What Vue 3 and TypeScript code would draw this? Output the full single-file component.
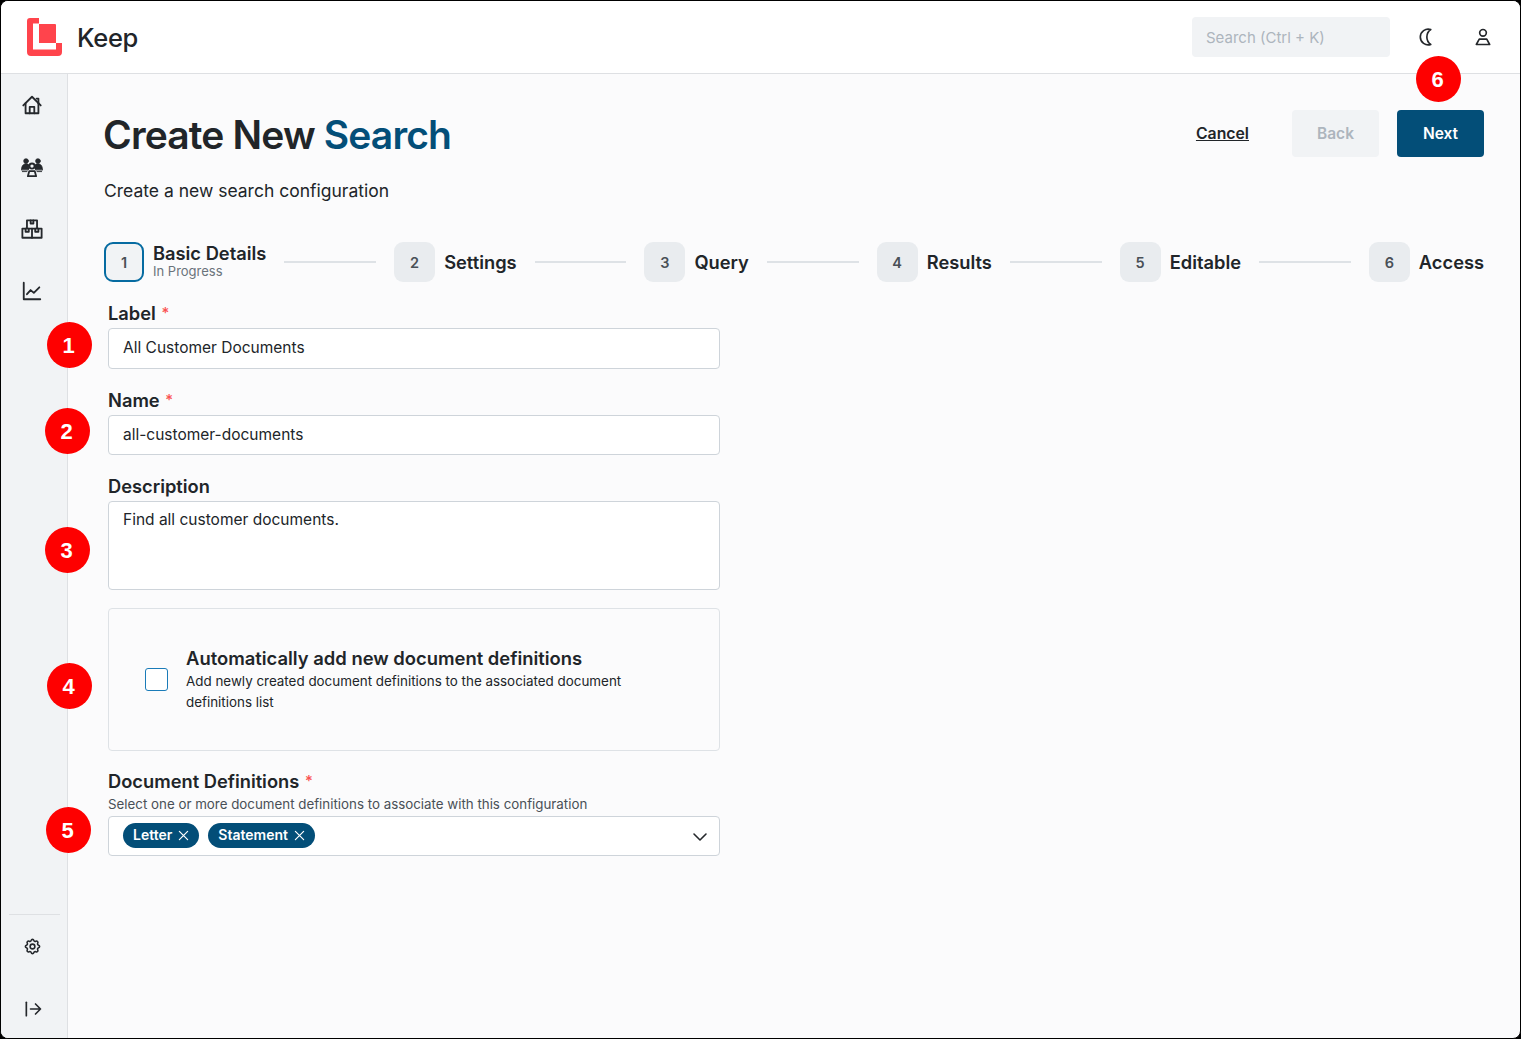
<script setup lang="ts">
const steps = [
  { n: 1, title: 'Basic Details', sub: 'In Progress' },
  { n: 2, title: 'Settings' },
  { n: 3, title: 'Query' },
  { n: 4, title: 'Results' },
  { n: 5, title: 'Editable' },
  { n: 6, title: 'Access' }
]

const markers = [
  { n: 1, x: 46, y: 321 },
  { n: 2, x: 44, y: 407 },
  { n: 3, x: 44, y: 526 },
  { n: 4, x: 46, y: 662 },
  { n: 5, x: 45, y: 806 },
  { n: 6, x: 1415, y: 55 }
]
</script>

<template>
  <div class="frame">
    <header class="topbar">
      <div class="brand">
        <svg class="logo" viewBox="0 0 35 38" width="35" height="38">
          <path d="M3 0h9v25h23v9a4 4 0 0 1-4 4H4a4 4 0 0 1-4-4V3a3 3 0 0 1 3-3z" fill="#ff444c" />
          <path d="M6 5.500h6V25h17v6.500H6z" fill="#fff" />
          <path d="M12 6h16a1 1 0 0 1 1 1v18H12z" fill="#ff444c" />
        </svg>
        <span class="brand-name">Keep</span>
      </div>
      <div class="top-actions">
        <div class="search">Search (Ctrl + K)</div>
        <svg class="moon" viewBox="0 0 24 24" width="20" height="20">
          <path d="M16.500 3a9.500 9.500 0 1 0 0 18 11 11 0 0 1 0-18z" />
        </svg>
        <svg class="user" viewBox="0 0 24 24" width="20" height="20">
          <circle cx="12" cy="7" r="4" />
          <path d="M7.500 14.500h9L20 21H4z" />
        </svg>
      </div>
    </header>

    <div class="body">
      <aside class="sidebar">
        <nav class="nav">
          <svg viewBox="0 0 24 24" width="22" height="22">
            <path d="M2.500 12.500 12 3l9.500 9.500" />
            <path d="M17 5h2v5" />
            <path d="M5 10v11h14V10" />
            <path d="M9.500 21v-7h5v7" />
          </svg>
          <svg viewBox="0 0 24 24" width="22" height="22">
            <circle cx="5.500" cy="5.500" r="2.600" class="solid" />
            <circle cx="18.500" cy="5.500" r="2.600" class="solid" />
            <path d="M.5 15c0-4 2-6.500 5-6.500 1.500 0 2.500.5 3.500 1.500-.5 1-.5 2.500 0 3.500L8 15z" class="solid" />
            <path d="M23.500 15c0-4-2-6.500-5-6.500-1.500 0-2.500.5-3.500 1.500.5 1 .5 2.500 0 3.500l1 1.500z" class="solid" />
            <circle cx="12" cy="11" r="2.800" />
            <path d="M7.500 22 9 16.500h6l1.500 5.500z" />
            <path d="M1.500 17h5M17.500 17h5" class="thin" />
          </svg>
          <svg viewBox="0 0 24 24" width="22" height="22">
            <path d="M6.500 11V2.500h11V11" />
            <path d="M10.500 2.500V6h3V2.500" />
            <path d="M1.500 11.500h21v10h-21z" />
            <path d="M12 11.500v10" />
            <path d="M5 11.500V15h3.500v-3.500M15.500 11.500V15H19v-3.500" />
          </svg>
          <svg viewBox="0 0 24 24" width="22" height="22">
            <path d="M3 3v18h18" />
            <path d="m6.500 15.500 4-4.500 3.500 3 6-6" />
          </svg>
        </nav>
        <div class="nav-bottom">
          <svg viewBox="0 0 24 24" width="19" height="19">
            <path d="M10.325 4.317c.426 -1.756 2.924 -1.756 3.35 0a1.724 1.724 0 0 0 2.573 1.066c1.543 -.94 3.31 .826 2.37 2.37a1.724 1.724 0 0 0 1.065 2.572c1.756 .426 1.756 2.924 0 3.35a1.724 1.724 0 0 0 -1.066 2.573c.94 1.543 -.826 3.31 -2.37 2.37a1.724 1.724 0 0 0 -2.572 1.065c-.426 1.756 -2.924 1.756 -3.35 0a1.724 1.724 0 0 0 -2.573 -1.066c-1.543 .94 -3.31 -.826 -2.37 -2.37a1.724 1.724 0 0 0 -1.065 -2.572c-1.756 -.426 -1.756 -2.924 0 -3.35a1.724 1.724 0 0 0 1.066 -2.573c-.94 -1.543 .826 -3.31 2.37 -2.37c1 .608 2.296 .07 2.572 -1.065z" />
            <circle cx="12" cy="12" r="3" />
          </svg>
          <svg class="collapse" viewBox="0 0 24 24" width="20" height="20">
            <path d="M4 4v16" />
            <path d="M9 12h12M15 6l6 6-6 6" />
          </svg>
        </div>
      </aside>

      <main class="main">
        <div class="page-head">
          <h1>Create New <span>Search</span></h1>
          <div class="buttons">
            <a class="cancel">Cancel</a>
            <button class="btn back">Back</button>
            <button class="btn next">Next</button>
          </div>
        </div>
        <p class="subtitle">Create a new search configuration</p>

        <div class="stepper">
          <template v-for="(s, i) in steps" :key="s.n">
            <div class="step">
              <div class="step-num" :class="{ current: i === 0 }">{{ s.n }}</div>
              <div>
                <div class="step-title">{{ s.title }}</div>
                <div v-if="s.sub" class="step-sub">{{ s.sub }}</div>
              </div>
            </div>
            <div v-if="i < steps.length - 1" class="connector"></div>
          </template>
        </div>

        <form class="form">
          <div class="field">
            <label>Label <em>*</em></label>
            <div class="input">All Customer Documents</div>
          </div>
          <div class="field">
            <label>Name <em>*</em></label>
            <div class="input">all-customer-documents</div>
          </div>
          <div class="field">
            <label>Description</label>
            <div class="input textarea">Find all customer documents.</div>
          </div>
          <div class="check-card">
            <span class="checkbox"></span>
            <div>
              <div class="check-title">Automatically add new document definitions</div>
              <div class="check-desc">Add newly created document definitions to the associated document definitions list</div>
            </div>
          </div>
          <div class="field docs">
            <label>Document Definitions <em>*</em></label>
            <div class="hint">Select one or more document definitions to associate with this configuration</div>
            <div class="input select">
              <span class="pill">Letter
                <svg viewBox="0 0 12 12" width="11" height="11"><path d="m1.500 1.500 9 9M10.500 1.500l-9 9" /></svg>
              </span>
              <span class="pill">Statement
                <svg viewBox="0 0 12 12" width="11" height="11"><path d="m1.500 1.500 9 9M10.500 1.500l-9 9" /></svg>
              </span>
              <svg class="chevron" viewBox="0 0 16 16" width="16" height="16"><path d="m2 5 6 6 6-6" /></svg>
            </div>
          </div>
        </form>
      </main>
    </div>

    <div
      v-for="m in markers"
      :key="m.n"
      class="marker"
      :style="{ left: m.x + 'px', top: m.y + 'px' }"
    >{{ m.n }}</div>
  </div>
</template>

<style>
html, body {
  margin: 0;
  background: #000;
}
</style>

<style scoped>
.frame {
  position: relative;
  box-sizing: border-box;
  width: 1521px;
  height: 1039px;
  border: 1px solid #000;
  border-radius: 8px;
  overflow: hidden;
  display: flex;
  flex-direction: column;
  background: #fbfbfc;
  color: #212529;
  font-family: Inter, "Liberation Sans", sans-serif;
}
svg {
  fill: none;
  stroke: #25282c;
  stroke-width: 2;
  stroke-linecap: round;
  stroke-linejoin: round;
  flex: none;
}
.solid {
  fill: #25282c;
  stroke-width: 0.8;
}
.thin {
  stroke-width: 1;
}
.topbar {
  height: 73px;
  flex: none;
  box-sizing: border-box;
  border-bottom: 1px solid #dee0e3;
  background: #fff;
  display: flex;
  align-items: center;
  justify-content: space-between;
  padding: 0 27px 0 26px;
}
.brand {
  display: flex;
  align-items: center;
  gap: 15px;
}
.logo {
  stroke: none;
}
.brand-name {
  font-size: 25.500px;
  font-weight: 500;
  letter-spacing: -0.3px;
}
.top-actions {
  display: flex;
  align-items: center;
}
.search {
  box-sizing: border-box;
  width: 198px;
  height: 40px;
  border-radius: 4px;
  background: #f1f3f5;
  color: #adb5bd;
  font-size: 15px;
  line-height: 42px;
  padding-left: 14px;
  margin-right: 27px;
}
.moon {
  margin-right: 36px;
}
.body {
  flex: 1;
  display: flex;
  min-height: 0;
}
.sidebar {
  width: 66px;
  flex: none;
  border-right: 1px solid #dee0e3;
  background: #f1f3f5;
  display: flex;
  flex-direction: column;
  justify-content: space-between;
  align-items: center;
  padding: 20px 0 19px;
}
.nav {
  display: flex;
  flex-direction: column;
  align-items: center;
  gap: 40px;
  margin-right: 5px;
}
.nav-bottom {
  width: 51px;
  border-top: 1px solid #dee0e3;
  display: flex;
  flex-direction: column;
  align-items: center;
  gap: 43px;
  padding-top: 22px;
}
.nav-bottom svg {
  margin-right: 4px;
}
.nav-bottom .collapse {
  margin-right: 2px;
}
.main {
  flex: 1;
  min-width: 0;
  padding: 36px 36px 0 35px;
}
.page-head {
  display: flex;
  align-items: center;
  justify-content: space-between;
  height: 47px;
}
h1 {
  margin: 0;
  padding-top: 2px;
  font-size: 39px;
  font-weight: 600;
  letter-spacing: -0.85px;
  color: #212529;
}
h1 span {
  color: #034e78;
}
.buttons {
  display: flex;
  align-items: center;
}
.cancel {
  font-size: 15.800px;
  font-weight: 600;
  text-decoration: underline;
  margin-right: 43px;
}
.btn {
  width: 87px;
  height: 47px;
  border: 0;
  border-radius: 4px;
  font: 600 15.500px Inter, "Liberation Sans", sans-serif;
}
.back {
  background: #f1f3f5;
  color: #adb5bd;
  margin-right: 18px;
}
.next {
  background: #034e78;
  color: #fff;
}
.subtitle {
  margin: 23px 0 0;
  padding-left: 1px;
  font-size: 17.500px;
  line-height: 22px;
}
.stepper {
  display: flex;
  align-items: center;
  margin: 40px 0 0 1px;
  height: 40px;
}
.step {
  display: flex;
  align-items: center;
  gap: 9px;
}
.step-num {
  box-sizing: border-box;
  width: 41px;
  height: 40px;
  border-radius: 9px;
  background: #e9ecef;
  color: #495057;
  font-size: 14.500px;
  font-weight: 600;
  display: flex;
  align-items: center;
  justify-content: center;
}
.step-num.current {
  width: 40px;
  border: 2px solid #066ba1;
  background: #f1f3f5;
}
.step-title {
  font-size: 18.300px;
  font-weight: 600;
  line-height: 17px;
}
.step-sub {
  font-size: 13px;
  line-height: 18px;
  color: #6a737b;
}
.connector {
  flex: 1;
  height: 2px;
  background: #dee2e6;
  margin: 0 18px;
}
.form {
  width: 612px;
  margin-left: 5px;
  margin-top: 18px;
}
.field {
  margin-bottom: 18px;
}
label {
  display: block;
  font-size: 18.300px;
  font-weight: 600;
  line-height: 26px;
  height: 28px;
}
label em {
  font-style: normal;
  color: #fa5252;
  font-weight: 500;
  font-size: 15px;
  vertical-align: 2px;
  margin-left: 1px;
}
.input {
  box-sizing: border-box;
  height: 40.500px;
  border: 1px solid #ced4da;
  border-radius: 4px;
  background: #fff;
  font-size: 15.500px;
  line-height: 38.500px;
  padding-left: 14px;
}
.textarea {
  height: 89px;
  line-height: 20px;
  padding-top: 8px;
}
.check-card {
  box-sizing: border-box;
  height: 143px;
  border: 1px solid #dee2e6;
  border-radius: 4px;
  display: flex;
  align-items: center;
  gap: 18px;
  padding: 0 74px 0 36px;
  margin-bottom: 17px;
}
.checkbox {
  box-sizing: border-box;
  flex: none;
  width: 23px;
  height: 23px;
  border: 1px solid #1a7bb8;
  border-radius: 3px;
  background: #fff;
}
.check-title {
  font-size: 18.400px;
  font-weight: 600;
  line-height: 24px;
}
.check-desc {
  font-size: 13.400px;
  line-height: 21px;
  margin-top: 1px;
}
.hint {
  font-size: 13.330px;
  line-height: 17px;
  margin-bottom: 3px;
  color: #495057;
}
.select {
  position: relative;
  height: 40px;
  display: flex;
  align-items: center;
  gap: 9px;
  padding-bottom: 1px;
}
.pill {
  box-sizing: border-box;
  display: inline-flex;
  align-items: center;
  gap: 6px;
  height: 25px;
  border-radius: 13px;
  background: #034e78;
  color: #fff;
  font-size: 14px;
  font-weight: 600;
  line-height: 21px;
  padding: 0 10px 2px;
}
.pill svg {
  stroke: #fff;
  stroke-width: 1.300;
  margin-top: 2px;
}
.chevron {
  position: absolute;
  right: 11px;
  top: 12px;
  stroke-width: 1.600;
}
.marker {
  position: absolute;
  box-sizing: border-box;
  width: 45px;
  height: 46px;
  padding-right: 2px;
  border-radius: 50%;
  background: #fe0000;
  color: #fff;
  font: 700 22px/47px "Liberation Sans", sans-serif;
  text-align: center;
}
</style>
